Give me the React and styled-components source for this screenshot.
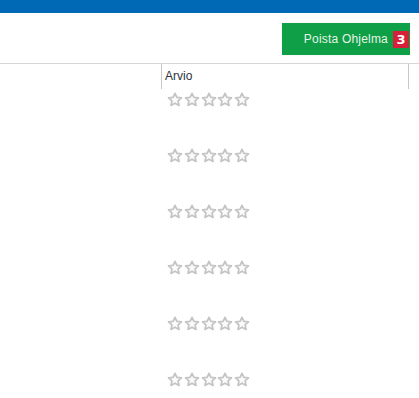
import React from "react";
import styled, { createGlobalStyle } from "styled-components";

const Global = createGlobalStyle`
  html, body { margin: 0; padding: 0; background: #ffffff; }
  body { font-family: "Liberation Sans", Arial, sans-serif; overflow: hidden; }
`;

const Page = styled.div`
  width: 419px;
  height: 398px;
  overflow: hidden;
  background: #fff;
  display: flex;
  flex-direction: column;
  & > * { flex-shrink: 0; }
`;

const TopBar = styled.div`
  height: 13px;
  background: #0069b5;
`;

const Toolbar = styled.div`
  height: 50px;
  display: flex;
  justify-content: flex-end;
  align-items: flex-start;
  padding: 10px 9px 0 0;
  box-sizing: border-box;
`;

const Button = styled.button`
  width: 128px;
  height: 32px;
  border: none;
  background: #0e9f47;
  display: flex;
  align-items: center;
  justify-content: flex-end;
  padding: 0 1px 0 0;
  gap: 5px;
  font-family: "Liberation Sans", Arial, sans-serif;
  font-size: 12px;
  letter-spacing: 0.2px;
  color: #e6f3e6;
  box-shadow: 0 0 2px rgba(0, 0, 0, 0.08);
`;

const Badge = styled.span`
  width: 16px;
  height: 17px;
  background: #d42139;
  color: #fff;
  font-family: "DejaVu Sans", Verdana, sans-serif;
  font-weight: bold;
  font-size: 13px;
  letter-spacing: 0;
  display: flex;
  align-items: center;
  justify-content: center;
`;

const Table = styled.div`
  border-top: 1px solid #d6d6d6;
  display: flex;
  flex-direction: column;
`;

const Row = styled.div`
  display: grid;
  grid-template-columns: 161px 247px 1fr;
  height: ${(p) => p.$h}px;
  flex-shrink: 0;
`;

const Cell = styled.div`
  box-sizing: border-box;
  border-left: ${(p) => (p.$divider ? "1px solid #c8c8c8" : "none")};
  padding: ${(p) => p.$pad || "0"};
`;

const HeadText = styled.span`
  display: block;
  font-family: "Liberation Sans", Arial, sans-serif;
  font-size: 12px;
  color: #2b3340;
  padding: 5px 0 0 3px;
`;

const Stars = styled.div`
  display: flex;
  gap: 0.8px;
`;

const Star = () => (
  <svg width="16" height="15" viewBox="0 0 24 23">
    <path
      d="M12 2l2.9 6.3 7 .8-5.2 4.6 1.5 6.9L12 17.1l-6.2 3.5 1.5-6.9-5.2-4.6 7-.8z"
      fill="#fbfbfb"
      stroke="#c4c4c4"
      strokeWidth="2.7"
      strokeLinejoin="round"
    />
  </svg>
);

const Rating = () => (
  <Stars>
    {[0, 1, 2, 3, 4].map((i) => (
      <Star key={i} />
    ))}
  </Stars>
);

export default function App() {
  return (
    <Page>
      <Global />
      <TopBar />
      <Toolbar>
        <Button>
          Poista Ohjelma
          <Badge>3</Badge>
        </Button>
      </Toolbar>
      <Table>
        <Row $h={25}>
          <Cell />
          <Cell $divider>
            <HeadText>Arvio</HeadText>
          </Cell>
          <Cell $divider />
        </Row>
        {[0, 1, 2, 3, 4, 5].map((i) => (
          <Row key={i} $h={56}>
            <Cell />
            <Cell $pad="3px 0 0 6px">
              <Rating />
            </Cell>
            <Cell />
          </Row>
        ))}
      </Table>
    </Page>
  );
}
